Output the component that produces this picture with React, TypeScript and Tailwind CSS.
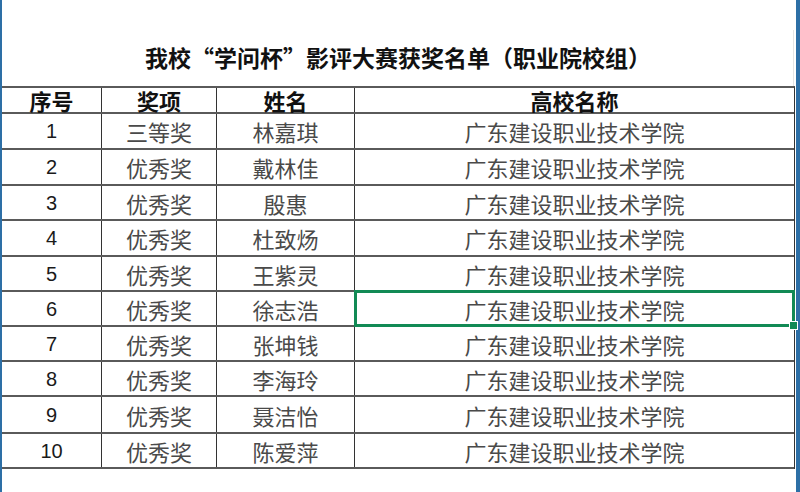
import React from "react";

const rows: [string, string, string, number][] = [
  ["1", "三等奖", "林嘉琪", 36],
  ["2", "优秀奖", "戴林佳", 36],
  ["3", "优秀奖", "殷惠", 35],
  ["4", "优秀奖", "杜致炀", 36],
  ["5", "优秀奖", "王紫灵", 35],
  ["6", "优秀奖", "徐志浩", 35],
  ["7", "优秀奖", "张坤钱", 35],
  ["8", "优秀奖", "李海玲", 35],
  ["9", "优秀奖", "聂洁怡", 37],
  ["10", "优秀奖", "陈爱萍", 35],
];

const cjk = "font-['Noto_Sans_CJK_SC',sans-serif]";
const num = "font-['Liberation_Sans','Noto_Sans_CJK_SC',sans-serif]";

export default function App() {
  return (
    <div className="w-[800px] h-[492px] bg-white flex overflow-hidden">
      <div className="w-[2px] h-full bg-[#2d6fa6]" />
      <div className="w-[793px] h-full flex flex-col">
        <div className="relative h-[86px] flex justify-center pt-[43px] pr-[1px]">
          <div className="absolute right-[1px] top-[30px] bottom-0 w-px bg-[#e4e4e4]" />
          <div className={`${cjk} text-[23px] leading-[28px] font-bold text-[#111]`}>
            我校“学问杯”影评大赛获奖名单（职业院校组）
          </div>
        </div>
        <div className="border-t-2 border-[#5a5a5a] border-r border-r-[#333]">
          <div className="grid grid-cols-[100px_115px_138px_1fr] h-[26px] border-b-2 border-[#5a5a5a]">
            {["序号", "奖项", "姓名", "高校名称"].map((h, i) => (
              <div
                key={h}
                className={`${cjk} flex items-center justify-center text-[22px] leading-none font-bold text-[#111] ${i < 3 ? "border-r border-[#333]" : ""}`}
              >
                {h}
              </div>
            ))}
          </div>
          {rows.map(([n, a, name, h], ri) => (
            <div
              key={n}
              className="grid grid-cols-[100px_115px_138px_1fr] border-b-2 border-[#5a5a5a]"
              style={{ height: h }}
            >
              <div className={`${num} flex items-center justify-center text-[20px] leading-none text-[#1a1a1a] border-r border-[#333]`}>
                {n}
              </div>
              <div className={`${cjk} flex items-center justify-center text-[22px] leading-none text-[#4a4a4a] border-r border-[#333]`}>
                {a}
              </div>
              <div className={`${cjk} flex items-center justify-center text-[22px] leading-none text-[#4a4a4a] border-r border-[#333]`}>
                {name}
              </div>
              <div className={`${cjk} relative flex items-center justify-center text-[22px] leading-none text-[#4a4a4a]`}>
                广东建设职业技术学院
                {ri === 5 && (
                  <div className="absolute left-[-1px] right-[-1px] top-[-2px] bottom-[-2px] border-[3px] border-solid border-[#128a55]">
                    <div className="absolute right-[-5px] bottom-[-5px] w-[7px] h-[7px] bg-[#128a55] shadow-[0_0_0_1px_#ffffff]" />
                  </div>
                )}
              </div>
            </div>
          ))}
        </div>
      </div>
      <div className="w-px h-full bg-white" />
      <div className="w-[4px] h-full bg-[#2d6fa6]" />
    </div>
  );
}
